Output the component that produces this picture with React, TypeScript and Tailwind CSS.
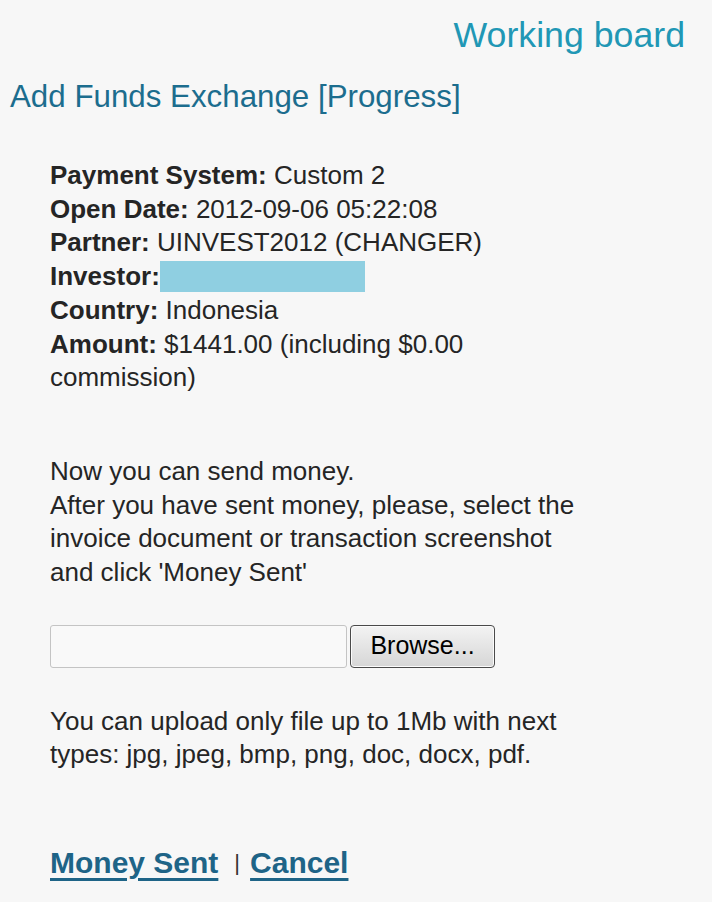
export default function App() {
  return (
    <div
      className="min-h-[902px] w-[712px] bg-[#f7f7f7] text-[#252525]"
      style={{ fontFamily: '"Liberation Sans", Arial, sans-serif' }}
    >
      <div className="flex justify-end pr-[27px] pt-[15px]">
        <span className="text-[35.7px] leading-[40px] text-[#2197b5]">Working board</span>
      </div>
      <h1 className="mt-[24px] pl-[10px] text-[31.3px] font-normal leading-[36px] text-[#1c6d8e]">
        Add Funds Exchange [Progress]
      </h1>
      <div className="pl-[50px] text-[26px] leading-[33.7px]">
        <div className="mt-[44px]">
          <div>
            <b>Payment System:</b> Custom 2
          </div>
          <div>
            <b>Open Date:</b> 2012-09-06 05:22:08
          </div>
          <div>
            <b>Partner:</b> UINVEST2012 (CHANGER)
          </div>
          <div className="flex items-center">
            <b>Investor:</b>
            <span className="inline-block h-[31px] w-[205px] bg-[#8fcfe1]"></span>
          </div>
          <div>
            <b>Country:</b> Indonesia
          </div>
          <div>
            <b>Amount:</b> $1441.00 (including $0.00
            <br />
            commission)
          </div>
        </div>
        <p className="mt-[60px]">
          Now you can send money.
          <br />
          After you have sent money, please, select the
          <br />
          invoice document or transaction screenshot
          <br />
          and click 'Money Sent'
        </p>
        <div className="mt-[35px] flex h-[43px] items-stretch gap-[3px]">
          <div className="w-[297px] rounded-[3px] border border-[#c4c4c4] bg-[#f9f9f9]"></div>
          <button className="w-[145px] rounded-[4px] border border-[#4a4a4a] bg-gradient-to-b from-[#f3f3f3] to-[#d6d6d6] text-[25px] text-black shadow-[inset_0_0_0_1px_#fbfbfb]">
            Browse...
          </button>
        </div>
        <p className="mt-[37px]">
          You can upload only file up to 1Mb with next
          <br />
          types: jpg, jpeg, bmp, png, doc, docx, pdf.
        </p>
        <div className="mt-[73px] flex items-center text-[30px] leading-[36px]">
          <a className="font-bold text-[#1e6487] underline decoration-[3px] underline-offset-[5px]" href="#">
            Money Sent
          </a>
          <span className="ml-[16px] mr-[10px] text-[22px] text-[#333]">|</span>
          <a className="font-bold text-[#1e6487] underline decoration-[3px] underline-offset-[5px]" href="#">
            Cancel
          </a>
        </div>
      </div>
    </div>
  );
}
